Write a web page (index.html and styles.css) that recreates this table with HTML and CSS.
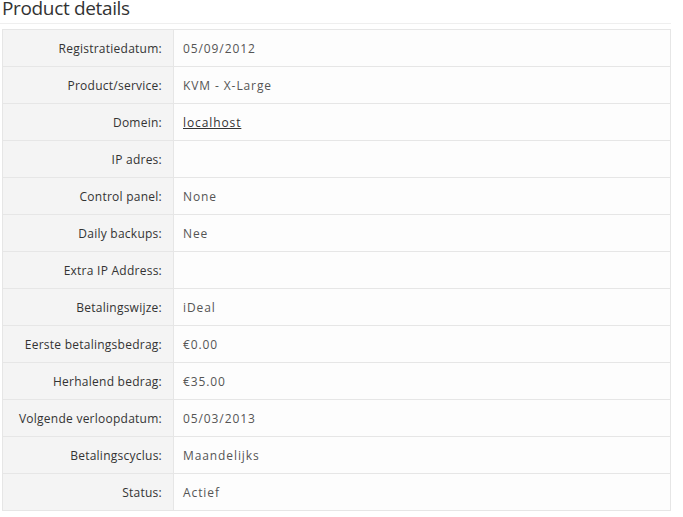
FILE: index.html
```html
<!DOCTYPE html>
<html lang="nl">
  <head>
    <meta charset="UTF-8" />
    <title>Product details</title>
    <link rel="stylesheet" href="styles.css">
  </head>
  <body>
    <div class="wrap">
      <h2 class="title">Product details</h2>

      <table class="details">
        <tr><th>Registratiedatum:</th><td>05/09/2012</td></tr>
        <tr><th>Product/service:</th><td>KVM - X-Large</td></tr>
        <tr><th>Domein:</th><td><a href="#">localhost</a></td></tr>
        <tr><th>IP adres:</th><td></td></tr>
        <tr><th>Control panel:</th><td>None</td></tr>
        <tr><th>Daily backups:</th><td>Nee</td></tr>
        <tr><th>Extra IP Address:</th><td></td></tr>
        <tr><th>Betalingswijze:</th><td>iDeal</td></tr>
        <tr><th>Eerste betalingsbedrag:</th><td>€0.00</td></tr>
        <tr><th>Herhalend bedrag:</th><td>€35.00</td></tr>
        <tr><th>Volgende verloopdatum:</th><td>05/03/2013</td></tr>
        <tr><th>Betalingscyclus:</th><td>Maandelijks</td></tr>
        <tr><th>Status:</th><td>Actief</td></tr>
      </table>
    </div>
  </body>
</html>
```

FILE: styles.css
```css
body {
  margin: 0;
  background-color: #fff;
  font-family: "Open Sans", "Noto Sans", Arial, sans-serif;
  font-size: 12px;
  color: #333;
}

.wrap {
  width: 671px;
}

.title {
  margin: 0;
  padding: 0 0 6px 2px;
  font-size: 19px;
  font-weight: normal;
  line-height: 17px;
  letter-spacing: -0.35px;
  color: #333;
  border-bottom: 1px solid #efefef;
}

.details {
  margin: 5px 0 0 2px;
  width: 669px;
  border-collapse: collapse;
  border: 1px solid #e6e6e6;
}

.details th,
.details td {
  height: 36px;
  font-weight: normal;
  border-top: 1px solid #e6e6e6;
  vertical-align: middle;
}

.details th {
  width: 149px;
  padding: 0 11px 0 10px;
  text-align: right;
  letter-spacing: 0.25px;
  background-color: #f4f4f4;
  color: #333;
  border-right: 1px solid #e6e6e6;
}

.details td {
  padding: 0 10px 0 9px;
  text-align: left;
  letter-spacing: 0.9px;
  background-color: #fdfdfd;
  color: #555;
}

.details a {
  color: #333;
  text-decoration: underline;
}
```
